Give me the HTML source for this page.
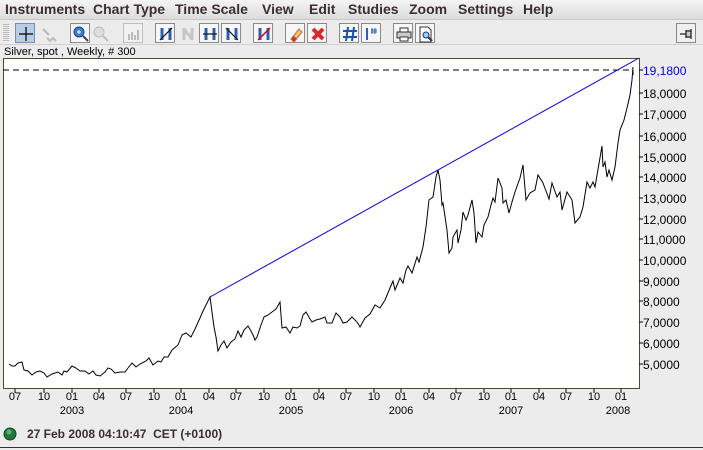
<!DOCTYPE html>
<html><head><style>
*{margin:0;padding:0;box-sizing:border-box}
body{width:703px;height:450px;background:#ececec;font-family:"Liberation Sans",sans-serif;position:relative;overflow:hidden}
.menu{position:absolute;left:0;top:0;width:703px;height:20px;background:linear-gradient(#f4f4f4,#dcdcdc);border-bottom:1px solid #c8c8c8}
.menu span{position:absolute;top:1px;font-size:14px;font-weight:bold;color:#3b2e2e}
.tb{position:absolute;top:20px;left:0;width:703px;height:25px;background:#ececec;border-bottom:1px solid #d0d0d0}
.b{position:absolute;top:3px;width:20px;height:20px;border:1px solid #8a8a8a;background:#f6f6f6}
.b.d{border-color:#c0c0c0}
.b svg{position:absolute;left:0;top:0}
.grip{position:absolute;left:3px;top:4px;width:6px;height:18px;background:repeating-linear-gradient(#bbb 0 1px,transparent 1px 2px)}
.title{position:absolute;left:4px;top:46px;font-size:11px;color:#000}
.xl{position:absolute;top:391px;font-size:11px;color:#000;width:20px;margin-left:-10px;text-align:center}
.yr{position:absolute;top:405px;font-size:11px;color:#000;width:30px;margin-left:-15px;text-align:center}
.yl{position:absolute;left:643px;font-size:12px;color:#000;margin-top:1px}
</style></head><body>
<div class="menu">
<span style="left:5px">Instruments</span><span style="left:93px">Chart Type</span><span style="left:175px">Time Scale</span><span style="left:262px">View</span><span style="left:309px">Edit</span><span style="left:348px">Studies</span><span style="left:409px">Zoom</span><span style="left:458px">Settings</span><span style="left:523px">Help</span>
</div>
<div class="tb">
<div class="grip"></div>
<div class="b" style="left:15px;background:#b8cde4;border-color:#6f8fb3"><svg width="20" height="20"><path d="M10 3V17M3 10H17" stroke="#000" stroke-width="1.2"/></svg></div>
<div class="b d" style="left:37px;border-color:transparent;background:none"><svg width="20" height="20"><path d="M5 5L11 11M9 14l3 3 3-3 3 3" stroke="#bbb" stroke-width="2" fill="none"/></svg></div>
<div class="b" style="left:70px"><svg width="20" height="20"><circle cx="8" cy="8" r="5" fill="#3a7fd8" stroke="#1f3f80"/><path d="M6 8h4M8 6v4" stroke="#fff"/><path d="M12 12l5 5" stroke="#444" stroke-width="2"/></svg></div>
<div class="b d" style="left:90px;border-color:transparent;background:none"><svg width="20" height="20"><circle cx="8" cy="8" r="5" fill="#ddd" stroke="#bbb"/><path d="M12 12l5 5" stroke="#bbb" stroke-width="2"/></svg></div>
<div class="b d" style="left:123px;background:#f0f0f0"><svg width="20" height="20"><path d="M5 16V10M8 16V8M11 16V11M14 16V6" stroke="#bbb" stroke-width="2"/></svg></div>
<div class="b" style="left:155px"><svg width="20" height="20"><path d="M6 4v12M14 4v12" stroke="#2e5db4" stroke-width="3"/><path d="M4 16L16 4" stroke="#111" stroke-width="1.2"/></svg></div>
<div class="b d" style="left:177px;border-color:transparent;background:none"><svg width="20" height="20"><path d="M6 4v12M14 4v12M6 5l8 10" stroke="#c6c6c6" stroke-width="3"/></svg></div>
<div class="b" style="left:199px"><svg width="20" height="20"><path d="M6 4v12M14 4v12" stroke="#2e5db4" stroke-width="3"/><path d="M3 10H17" stroke="#111" stroke-width="1.2"/></svg></div>
<div class="b" style="left:221px"><svg width="20" height="20"><path d="M6 4v12M14 4v12" stroke="#2e5db4" stroke-width="3"/><path d="M4 4L16 16" stroke="#111" stroke-width="1.2"/></svg></div>
<div class="b" style="left:253px"><svg width="20" height="20"><path d="M6 4v12M14 4v12" stroke="#2e5db4" stroke-width="3"/><path d="M4 16L16 4" stroke="#d00" stroke-width="1.5"/></svg></div>
<div class="b" style="left:285px"><svg width="20" height="20"><path d="M5 15L13 5l3 3-8 10z" fill="#f4c070" stroke="#b07030"/><path d="M5 15l3 3 3-3-3-3z" fill="#e03030"/></svg></div>
<div class="b" style="left:307px"><svg width="20" height="20"><path d="M5 5L15 15M15 5L5 15" stroke="#d42a2a" stroke-width="4"/></svg></div>
<div class="b" style="left:339px"><svg width="20" height="20"><path d="M8 3L6 17M14 3L12 17M3 7H17M3 13H17" stroke="#1f4fb0" stroke-width="2"/></svg></div>
<div class="b" style="left:361px"><svg width="20" height="20"><path d="M5 4V16" stroke="#2e5db4" stroke-width="2"/><path d="M10 4v6M13 4v6M9 6h6M9 8h6" stroke="#2e5db4" stroke-width="1"/></svg></div>
<div class="b" style="left:393px"><svg width="20" height="20"><rect x="3" y="8" width="14" height="6" fill="#ccc" stroke="#333"/><rect x="6" y="4" width="8" height="4" fill="#fff" stroke="#333"/><rect x="6" y="13" width="8" height="4" fill="#fff" stroke="#333"/></svg></div>
<div class="b" style="left:415px"><svg width="20" height="20"><path d="M4 3h8l3 3v12H4z" fill="#fff" stroke="#333"/><circle cx="10" cy="11" r="3" fill="#9cf" stroke="#235"/><path d="M12 13l4 4" stroke="#235" stroke-width="2"/></svg></div>
<div class="b" style="left:676px;border-color:#888;background:#f0f0f0"><svg width="20" height="20"><path d="M3 10h6M9 6v8M9 7h5v6H9M14 5v10" stroke="#222" stroke-width="1.3" fill="#ccc"/></svg></div>
</div>
<div class="title">Silver, spot , Weekly, # 300</div>
<svg style="position:absolute;left:0;top:0" width="703" height="450">
<rect x="3.5" y="58.5" width="636" height="330" fill="#fff" stroke="#4a4a30"/>
<path d="M3 70H633V75" stroke="#000" stroke-dasharray="6,4" fill="none"/>
<path d="M210 297L639 58" stroke="#0000e0" stroke-width="1"/>
<polyline fill="none" stroke="#000" stroke-width="1" points="9,364 12,366 15,366 18,363 22,362 24,370 28,371 32,375 36,372 40,371 44,373 47,377 52,374 58,372 62,375 64,371 67,372 72,366 76,368 80,371 85,371 89,374 93,371 96,375 100,376 105,372 108,368 111,369 115,373 120,372 125,372 128,368 132,363 136,367 140,364 146,361 149,358 153,365 158,361 161,362 164,357 168,357 172,350 178,345 182,335 186,333 191,337 195,329 200,318 203,311 206,305 210,297 214,327 216,337 218,351 221,345 224,341 227,348 231,342 235,339 238,331 241,337 244,330 248,326 251,331 253,335 255,340 257,337 261,325 264,317 268,315 272,312 276,309 280,302 282,328 286,327 290,333 293,327 297,328 300,326 303,315 306,312 310,319 312,322 316,320 320,319 325,317 327,323 332,323 336,313 340,317 343,323 347,322 352,317 357,322 360,327 365,318 370,314 375,305 380,308 385,300 390,288 393,281 395,290 400,278 403,283 406,270 408,266 412,273 417,257 419,262 423,247 426,227 429,200 433,197 436,177 438,170 440,180 442,205 443,203 447,230 449,253 452,248 453,237 457,230 458,243 461,230 463,212 466,220 468,215 472,200 474,213 476,243 478,232 482,237 484,225 488,217 491,205 493,198 495,202 498,178 502,188 503,203 506,200 509,213 512,202 515,192 520,178 523,165 526,200 530,193 535,190 538,175 543,183 549,199 552,183 557,197 560,192 562,210 567,192 572,200 575,223 580,217 583,207 587,182 590,188 593,182 595,187 602,146 603,167 605,162 607,177 609,170 612,180 615,167 618,143 620,130 624,120 627,108 630,95 632,80 633,67"/>
<g stroke="#000">
<path d="M639 93h4M639 114h4M639 136h4M639 157h4M639 177h4M639 198h4M639 219h4M639 239h4M639 260h4M639 281h4M639 301h4M639 322h4M639 343h4M639 364h4M639 70h4"/>
<path d="M15 389v4M44 389v4M72 389v4M99 389v4M126 389v4M154 389v4M181 389v4M209 389v4M236 389v4M264 389v4M291 389v4M319 389v4M346 389v4M374 389v4M401 389v4M429 389v4M456 389v4M484 389v4M511 389v4M539 389v4M566 389v4M594 389v4M621 389v4"/>
</g>
<circle cx="10" cy="434" r="6" fill="#1f7a3a" stroke="#0d4a22"/>
<circle cx="9" cy="432" r="2.5" fill="#5fb07a"/>
<path d="M0 447.5H703" stroke="#333"/>
</svg>
<div class="yl" style="top:63px;color:#0000e0">19,1800</div>
<div class="yl" style="top:86px">18,0000</div><div class="yl" style="top:107px">17,0000</div><div class="yl" style="top:129px">16,0000</div><div class="yl" style="top:150px">15,0000</div><div class="yl" style="top:170px">14,0000</div><div class="yl" style="top:191px">13,0000</div><div class="yl" style="top:212px">12,0000</div><div class="yl" style="top:232px">11,0000</div><div class="yl" style="top:253px">10,0000</div><div class="yl" style="top:274px">9,0000</div><div class="yl" style="top:294px">8,0000</div><div class="yl" style="top:315px">7,0000</div><div class="yl" style="top:336px">6,0000</div><div class="yl" style="top:357px">5,0000</div>
<div class="xl" style="left:15px">07</div><div class="xl" style="left:44px">10</div><div class="xl" style="left:72px">01</div><div class="xl" style="left:99px">04</div><div class="xl" style="left:126px">07</div><div class="xl" style="left:154px">10</div><div class="xl" style="left:181px">01</div><div class="xl" style="left:209px">04</div><div class="xl" style="left:236px">07</div><div class="xl" style="left:264px">10</div><div class="xl" style="left:291px">01</div><div class="xl" style="left:319px">04</div><div class="xl" style="left:346px">07</div><div class="xl" style="left:374px">10</div><div class="xl" style="left:401px">01</div><div class="xl" style="left:429px">04</div><div class="xl" style="left:456px">07</div><div class="xl" style="left:484px">10</div><div class="xl" style="left:511px">01</div><div class="xl" style="left:539px">04</div><div class="xl" style="left:566px">07</div><div class="xl" style="left:594px">10</div><div class="xl" style="left:621px">01</div>
<div class="yr" style="left:72px">2003</div><div class="yr" style="left:181px">2004</div><div class="yr" style="left:291px">2005</div><div class="yr" style="left:401px">2006</div><div class="yr" style="left:511px">2007</div><div class="yr" style="left:618px">2008</div>
<div style="position:absolute;left:27px;top:427px;font-size:12px;font-weight:bold;color:#3b2e2e">27 Feb 2008 04:10:47&nbsp; CET (+0100)</div>
</body></html>
